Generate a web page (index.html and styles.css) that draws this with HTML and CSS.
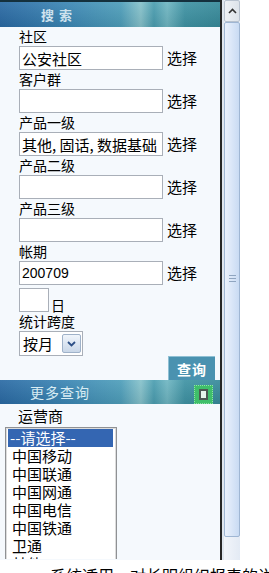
FILE: index.html
```html
<!DOCTYPE html>
<html lang="zh-CN">
<head>
  <meta charset="UTF-8" />
  <meta name="viewport" content="width=device-width, initial-scale=1.0">
  <title>搜索</title>
  <link rel="stylesheet" href="styles.css">
</head>
<body>
  <div class="frame">
    <div class="panel">
      <div class="bar">
        <span class="bar-title">搜 索</span>
      </div>

      <div class="form">
        <div class="label">社区</div>
        <div class="row">
          <input class="field" type="text" value="公安社区">
          <span class="pick">选择</span>
        </div>

        <div class="label">客户群</div>
        <div class="row">
          <input class="field" type="text" value="">
          <span class="pick">选择</span>
        </div>

        <div class="label">产品一级</div>
        <div class="row">
          <input class="field" type="text" value="其他, 固话, 数据基础">
          <span class="pick">选择</span>
        </div>

        <div class="label">产品二级</div>
        <div class="row">
          <input class="field" type="text" value="">
          <span class="pick">选择</span>
        </div>

        <div class="label">产品三级</div>
        <div class="row">
          <input class="field" type="text" value="">
          <span class="pick">选择</span>
        </div>

        <div class="label">帐期</div>
        <div class="row">
          <input class="field field-num" type="text" value="200709">
          <span class="pick">选择</span>
        </div>

        <div class="row row-day">
          <input class="field field-day" type="text" value="">
          <span class="day">日</span>
        </div>

        <div class="label">统计跨度</div>
        <div class="dropdown">
          <span class="dropdown-text">按月</span>
          <span class="dropdown-btn">
            <svg width="9" height="6" viewBox="0 0 9 6"><path d="M1 1 L4.5 4.5 L8 1" fill="none" stroke="#2c4f86" stroke-width="1.8"/></svg>
          </span>
        </div>
      </div>

      <div class="actions">
        <button class="query-btn">查询</button>
      </div>

      <div class="bar bar-more">
        <span class="bar-title more-title">更多查询</span>
        <span class="bar-icon"><span class="bar-icon-inner"></span></span>
      </div>

      <div class="label op-label">运营商</div>
      <div class="op-list">
        <div class="op-item selected">--请选择--</div>
        <div class="op-item">中国移动</div>
        <div class="op-item">中国联通</div>
        <div class="op-item">中国网通</div>
        <div class="op-item">中国电信</div>
        <div class="op-item">中国铁通</div>
        <div class="op-item">卫通</div>
        <div class="op-item">其他</div>
      </div>
    </div>

    <div class="scrollbar">
      <div class="scroll-up">
        <svg width="9" height="6" viewBox="0 0 9 6"><path d="M1 5 L4.5 1.5 L8 5" fill="none" stroke="#333" stroke-width="1.6"/></svg>
      </div>
      <div class="scroll-thumb"><span class="grip"></span></div>
      <div class="scroll-track"></div>
    </div>
  </div>

  <p class="note">系统适用，对长明组织报表的说明</p>
</body>
</html>
```

FILE: styles.css
```css
* {
  margin: 0;
  padding: 0;
  box-sizing: border-box;
}

body {
  font-family: "Noto Sans CJK SC", sans-serif;
  background: #fff;
  color: #000;
  width: 269px;
  height: 573px;
  overflow: hidden;
}

.frame {
  display: flex;
  width: 240px;
  height: 560px;
}

.panel {
  width: 222px;
  height: 100%;
  background: #f5f9fd;
  border-right: 2px solid #262626;
  overflow: hidden;
}

/* title bars */
.bar {
  height: 27px;
  display: flex;
  align-items: center;
  justify-content: space-between;
  border-top: 2px solid #14303d;
  background:
    linear-gradient(180deg, rgba(255, 255, 255, 0.08), rgba(0, 0, 0, 0.08)),
    linear-gradient(90deg, #2a6aa4 0%, #3b86b4 30%, #4e9eba 55%, #86c2cb 64%, #4a9db0 70%, #6fb6c2 76%, #3f93a4 84%, #378a9a 100%);
}

.bar-title {
  padding-left: 41px;
  font-size: 13px;
  line-height: 16px;
  font-weight: bold;
  color: #cfe3ee;
  letter-spacing: 1px;
}

.bar-more {
  height: 24px;
  border-top: 0;
}

.more-title {
  padding-left: 30px;
  font-weight: normal;
  font-size: 14px;
  color: #d8ecf3;
}

.bar-icon {
  width: 19px;
  height: 19px;
  margin-right: 7px;
  margin-top: 4px;
  background: #3fbf6a;
  border: 1px dotted #8fe0a8;
  display: flex;
  align-items: center;
  justify-content: center;
}

.bar-icon-inner {
  width: 9px;
  height: 11px;
  background: #e6f6ea;
  border: 2px solid #4d5a52;
}

/* form */
.form {
  padding-left: 19px;
}

.label {
  font-size: 14px;
  line-height: 19px;
  height: 19px;
}

.row {
  display: flex;
  align-items: center;
  height: 24px;
}

.field {
  width: 144px;
  height: 24px;
  border: 1px solid #a9afb8;
  background: #fff;
  font-family: "Noto Sans CJK SC", sans-serif;
  font-size: 15px;
  line-height: 20px;
  padding: 0 2px;
  color: #000;
  outline: none;
}

.field-num {
  font-family: "Liberation Sans", sans-serif;
  font-size: 14px;
}

.pick {
  margin-left: 4px;
  font-size: 15px;
  line-height: 20px;
}

.row-day {
  margin-top: 3px;
  height: 24px;
  align-items: flex-end;
}

.field-day {
  width: 30px;
}

.day {
  margin-left: 2px;
  font-size: 14px;
  line-height: 14px;
}

.dropdown {
  width: 64px;
  height: 25px;
  border: 1px solid #a9afb8;
  background: #fff;
  display: flex;
  align-items: center;
  justify-content: space-between;
  padding: 0 1px 0 3px;
}

.dropdown-text {
  font-size: 15px;
  line-height: 20px;
}

.dropdown-btn {
  width: 19px;
  height: 19px;
  border: 1px solid #9fb2c9;
  border-radius: 2px;
  background: linear-gradient(180deg, #f0f5fb, #c9d7e8);
  display: flex;
  align-items: center;
  justify-content: center;
}

.actions {
  display: flex;
  justify-content: flex-end;
  padding-right: 5px;
  height: 24px;
}

.query-btn {
  width: 47px;
  height: 24px;
  border: 0;
  border-top: 1px solid #8fc0d4;
  border-left: 1px solid #8fc0d4;
  background: #4a92b0;
  color: #fff;
  font-family: "Noto Sans CJK SC", sans-serif;
  font-size: 14px;
  font-weight: bold;
  line-height: 20px;
  letter-spacing: 1px;
}

/* operator list */
.op-label {
  padding-left: 18px;
  height: 23px;
  line-height: 23px;
  font-size: 15px;
}

.op-list {
  margin-left: 5px;
  width: 112px;
  height: 132px;
  border: 1px solid #8f9194;
  border-bottom: 0;
  box-shadow: inset 1px 1px 0 #dcdcdc, inset -1px 0 0 #dcdcdc;
  background: #fff;
  padding: 1px 3px 0 2px;
  overflow: hidden;
}

.op-item {
  height: 18px;
  line-height: 18px;
  font-size: 15px;
  padding-left: 4px;
  white-space: nowrap;
}

.op-item.selected {
  background: #3466b2;
  color: #fff;
  padding-left: 2px;
}

/* scrollbar */
.scrollbar {
  width: 18px;
  height: 100%;
  display: flex;
  flex-direction: column;
  background: #e9eef6;
  border-left: 2px solid #dfe6ee;
}

.scroll-up {
  height: 22px;
  display: flex;
  align-items: center;
  justify-content: center;
  background: linear-gradient(90deg, #eef1f5, #dde3ea);
  border: 1px solid #b8c2cf;
  border-radius: 2px;
}

.scroll-thumb {
  height: 515px;
  display: flex;
  align-items: center;
  justify-content: center;
  background: linear-gradient(90deg, #eaf1fc, #c9dbf3);
  border: 1px solid #9fb6d3;
  border-radius: 2px;
}

.grip {
  width: 7px;
  height: 9px;
  background: repeating-linear-gradient(180deg, #8fa5c0 0, #8fa5c0 1px, transparent 1px, transparent 3px);
}

.scroll-track {
  flex: 1;
  background: linear-gradient(90deg, #f2f5fa, #e3eaf4);
}

.note {
  padding-left: 50px;
  margin-top: 5px;
  font-size: 16px;
  line-height: 20px;
  white-space: nowrap;
}
```
